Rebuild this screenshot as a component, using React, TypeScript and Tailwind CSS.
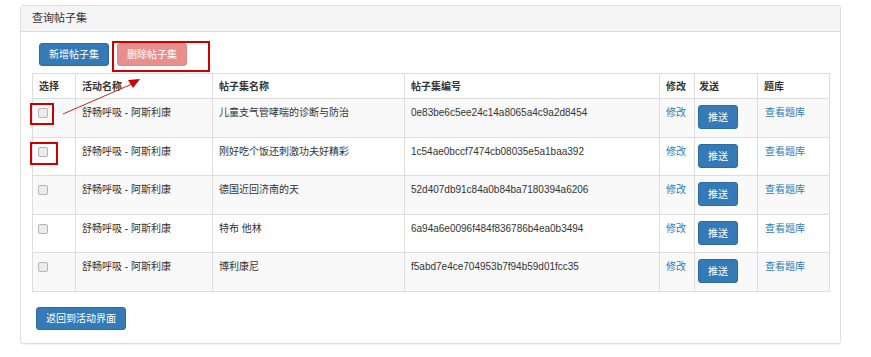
import React from "react";

const rows = [
  { act: "舒畅呼吸 - 阿斯利康", name: "儿童支气管哮喘的诊断与防治", code: "0e83be6c5ee24c14a8065a4c9a2d8454" },
  { act: "舒畅呼吸 - 阿斯利康", name: "刚好吃个饭还刺激功夫好精彩", code: "1c54ae0bccf7474cb08035e5a1baa392" },
  { act: "舒畅呼吸 - 阿斯利康", name: "德国近回济南的天", code: "52d407db91c84a0b84ba7180394a6206" },
  { act: "舒畅呼吸 - 阿斯利康", name: "特布 他林", code: "6a94a6e0096f484f836786b4ea0b3494" },
  { act: "舒畅呼吸 - 阿斯利康", name: "博利康尼", code: "f5abd7e4ce704953b7f94b59d01fcc35" },
];

const cols = ["选择", "活动名称", "帖子集名称", "帖子集编号", "修改", "发送", "题库"];
const widths = ["w-[43px]", "w-[137px]", "w-[192px]", "w-[255px]", "w-[35px]", "w-[63px]", "w-[72px]"];

export default function App() {
  return (
    <div className="relative w-[871px] h-[357px] bg-white pt-[5px] pl-[20px] font-['Liberation_Sans','Noto_Sans_CJK_SC',sans-serif] text-[#333]">
      <div className="w-[821px] border border-[#ddd] rounded-[3px] shadow-[0_1px_1px_rgba(0,0,0,0.05)]">
        <div className="h-[26px] bg-[#f5f5f5] border-b border-[#ddd] flex items-center px-[11px] text-[11px]">
          查询帖子集
        </div>
        <div className="pl-[11px] pr-[10px] pt-[11px] pb-[13px]">
          <div className="flex gap-[8px] pl-[7px]">
            <button className="w-[70px] h-[23px] rounded-[3px] bg-[#337ab7] border border-[#2e6da4] text-white text-[10px]">
              新增帖子集
            </button>
            <button className="w-[70px] h-[23px] rounded-[3px] bg-[#e68f8c] border border-[#e28783] text-white text-[10px]">
              删除帖子集
            </button>
          </div>
          <table className="mt-[7px] border-collapse text-[10px] table-fixed w-[797px]">
            <thead>
              <tr className="h-[25px]">
                {cols.map((c, i) => (
                  <th key={c} className={`${widths[i]} border border-[#ddd] text-left font-bold px-[6px] ${i === 5 ? "pl-[4px]" : ""}`}>
                    {c}
                  </th>
                ))}
              </tr>
            </thead>
            <tbody>
              {rows.map((r, i) => (
                <tr key={r.code} className={`${i % 2 === 0 ? "bg-[#f9f9f9] h-[39px]" : "bg-white h-[38px]"}`}>
                  <td className="border border-[#ddd] px-[5px] align-top pt-[9px]">
                    <span className="block w-[10px] h-[10px] rounded-[2px] border border-[#b5b5b5] bg-[#ececec]" />
                  </td>
                  <td className="border border-[#ddd] px-[6px] align-top pt-[6px]">{r.act}</td>
                  <td className="border border-[#ddd] px-[6px] align-top pt-[6px]">{r.name}</td>
                  <td className="border border-[#ddd] px-[6px] align-top pt-[6px]">{r.code}</td>
                  <td className="border border-[#ddd] px-[6px] align-top pt-[6px] text-[#337ab7]">修改</td>
                  <td className="border border-[#ddd] pl-[3px] align-top pt-[6px]">
                    <button className="w-[40px] h-[24px] rounded-[3px] bg-[#337ab7] border border-[#2e6da4] text-white text-[10px]">
                      推送
                    </button>
                  </td>
                  <td className="border border-[#ddd] px-[7px] align-top pt-[6px] text-[#337ab7]">查看题库</td>
                </tr>
              ))}
            </tbody>
          </table>
          <button className="mt-[15px] ml-[4px] w-[90px] h-[23px] rounded-[3px] bg-[#337ab7] border border-[#2e6da4] text-white text-[10px]">
            返回到活动界面
          </button>
        </div>
      </div>

      {/* annotations */}
      <div className="absolute left-[112px] top-[41px] w-[98px] h-[31px] border-2 border-[#cc0000]" />
      <div className="absolute left-[30px] top-[103px] w-[24px] h-[22px] border-2 border-[#cc0000]" />
      <div className="absolute left-[30px] top-[142px] w-[28px] h-[23px] border-2 border-[#cc0000]" />
      <svg className="absolute left-0 top-0" width="871" height="357">
        <line x1="63" y1="114" x2="132" y2="84" stroke="#c0292b" strokeWidth="1" />
        <polygon points="140,79 128,80 133,88" fill="#cc0000" />
      </svg>
    </div>
  );
}
